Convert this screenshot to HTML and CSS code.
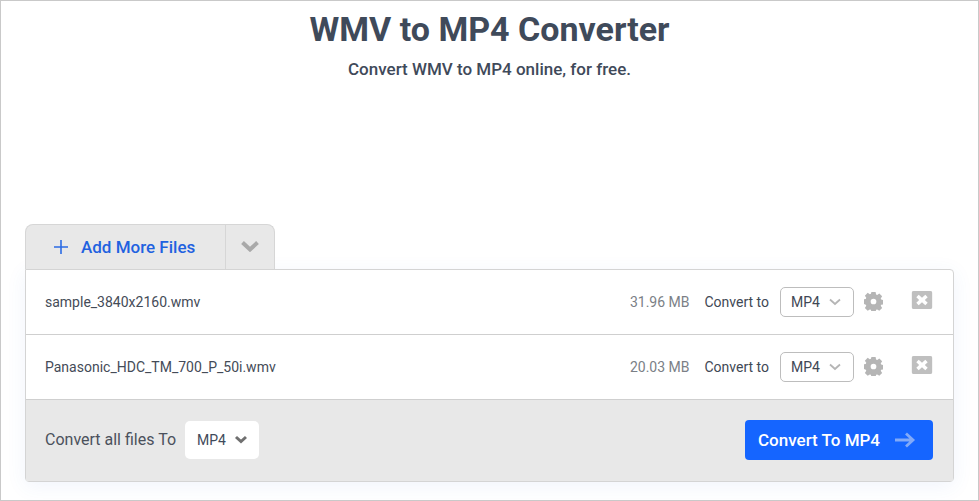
FILE: index.html
```html
<!DOCTYPE html>
<html lang="en">
<head>
    <meta charset="UTF-8">
    <meta name="viewport" content="width=device-width, initial-scale=1.0">
    <title>WMV to MP4 Converter</title>
    <link rel="stylesheet" href="styles.css">
</head>
<body>
    <div class="frame">
        <h1>WMV to MP4 Converter</h1>
        <p class="subtitle">Convert WMV to MP4 online, for free.</p>

        <div class="uploader">
            <!-- Add files tab -->
            <div class="tabs">
                <div class="tab-add">
                    <svg class="icon-plus" width="16" height="16" viewBox="0 0 16 16"><path d="M8 1v14M1 8h14"/></svg>
                    <span>Add More Files</span>
                </div>
                <div class="tab-more">
                    <svg class="icon-chevron-bold" width="20" height="12" viewBox="0 0 20 12"><path d="M2.500 2.500 10 9.500l7.500-7"/></svg>
                </div>
            </div>

            <div class="card">
                <div class="file-row">
                    <span class="file-name">sample_3840x2160.wmv</span>
                    <span class="file-size">31.96 MB</span>
                    <span class="convert-label">Convert to</span>
                    <div class="select">
                        <span>MP4</span>
                        <svg class="icon-chevron" width="14" height="8" viewBox="0 0 14 8"><path d="M2 1.500 7 6l5-4.500"/></svg>
                    </div>
                    <svg class="icon-gear" width="19" height="19" viewBox="0 0 20 20"><use href="#gear"/></svg>
                    <svg class="icon-close" width="22" height="18" viewBox="0 0 22 19"><use href="#close"/></svg>
                </div>
                <div class="file-row">
                    <span class="file-name">Panasonic_HDC_TM_700_P_50i.wmv</span>
                    <span class="file-size">20.03 MB</span>
                    <span class="convert-label">Convert to</span>
                    <div class="select">
                        <span>MP4</span>
                        <svg class="icon-chevron" width="14" height="8" viewBox="0 0 14 8"><path d="M2 1.500 7 6l5-4.500"/></svg>
                    </div>
                    <svg class="icon-gear" width="19" height="19" viewBox="0 0 20 20"><use href="#gear"/></svg>
                    <svg class="icon-close" width="22" height="18" viewBox="0 0 22 19"><use href="#close"/></svg>
                </div>

                <div class="card-footer">
                    <span class="all-label">Convert all files To</span>
                    <div class="select-all">
                        <span>MP4</span>
                        <svg class="icon-chevron-dark" width="14" height="9" viewBox="0 0 14 9"><path d="M2 2l5 4.500L12 2"/></svg>
                    </div>
                    <button class="convert-btn">
                        <span>Convert To MP4</span>
                        <svg class="icon-arrow" width="22" height="16" viewBox="0 0 22 16"><path d="M1 8h18M12 1.500 19 8l-7 6.500"/></svg>
                    </button>
                </div>
            </div>
        </div>
    </div>

    <!-- Shared icons -->
    <svg class="icon-defs" width="0" height="0">
        <symbol id="gear" viewBox="0 0 20 20">
            <path fill-rule="evenodd" d="M7.800 0h4.400l.5 2.600 1.200.5 2.200-1.500 3 3-1.500 2.200.5 1.200 2.600.5v4.400l-2.600.5-.5 1.200 1.500 2.200-3 3-2.200-1.500-1.200.5-.5 2.600H7.800l-.5-2.600-1.200-.5-2.200 1.500-3-3 1.500-2.200-.5-1.200L-.700 12.200V7.800l2.600-.5.5-1.200L.9 3.900l3-3 2.200 1.500 1.200-.5zM10 7a3 3 0 1 0 0 6 3 3 0 0 0 0-6z"/>
        </symbol>
        <symbol id="close" viewBox="0 0 22 19">
            <path fill-rule="evenodd" d="M2 0h18a2 2 0 0 1 2 2v15a2 2 0 0 1-2 2H2a2 2 0 0 1-2-2V2a2 2 0 0 1 2-2zm5.500 4L5 6.500 8 9.500l-3 3L7.500 15l3.500-3 3.500 3 2.500-2.500-3-3 3-3L14.500 4 11 7z"/>
        </symbol>
    </svg>
</body>
</html>
```

FILE: styles.css
```css
* {
    box-sizing: border-box;
}

body {
    margin: 0;
    font-family: Roboto, "Liberation Sans", sans-serif;
    color: #3f4a5a;
    background-color: #fff;
}

.frame {
    height: 501px;
    border: 1px solid #c9c9c9;
    padding: 9px 24px 0;
    overflow: hidden;
}

h1 {
    margin: 0;
    font-size: 34px;
    line-height: 38px;
    font-weight: 700;
    text-align: center;
}

.subtitle {
    margin: 10px 0 0;
    font-size: 17px;
    line-height: 22px;
    font-weight: 500;
    text-align: center;
}

.uploader {
    margin-top: 144px;
}

/* Add files tab */
.tabs {
    position: relative;
    z-index: 1;
    display: flex;
    width: 250px;
    height: 45px;
    background-color: #e8e8e8;
    border: 1px solid #d6d6d6;
    border-bottom: none;
    border-radius: 8px 8px 0 0;
}

.tab-add {
    width: 199px;
    display: flex;
    align-items: center;
    gap: 12px;
    padding-left: 27px;
    font-size: 17px;
    font-weight: 500;
    color: #1f62e0;
}

.tab-more {
    flex: 1;
    display: flex;
    align-items: center;
    justify-content: center;
    padding-bottom: 3px;
    border-left: 1px solid #d6d6d6;
}

.icon-plus {
    fill: none;
    stroke: #2b6be4;
    stroke-width: 1.600;
}

.icon-chevron-bold {
    fill: none;
    stroke: #a9a9a9;
    stroke-width: 4;
}

/* File list */
.card {
    width: 929px;
    background-color: #fff;
    border: 1px solid #d4d4d4;
    border-radius: 0 4px 4px 4px;
    box-shadow: 0 4px 20px rgba(70, 110, 220, 0.08);
}

.file-row {
    display: flex;
    align-items: center;
    height: 65px;
    padding: 0 20px 0 19px;
    border-bottom: 1px solid #cfcfcf;
    font-size: 14px;
}

.file-name {
    flex: 1;
    color: #444b57;
}

.file-size {
    color: #7b7f86;
}

.convert-label {
    margin-left: 15px;
    color: #3f4855;
}

.select {
    display: flex;
    align-items: center;
    justify-content: space-between;
    width: 74px;
    height: 30px;
    margin-left: 11px;
    padding: 0 11px 0 10px;
    border: 1px solid #bdbdbd;
    border-radius: 5px;
    color: #3f4855;
}

.icon-chevron {
    fill: none;
    stroke: #b5b5b5;
    stroke-width: 1.800;
}

.icon-gear {
    margin-left: 10px;
    margin-bottom: 2px;
    fill: #b5b5b5;
    overflow: visible;
}

.icon-close {
    margin-left: 28px;
    margin-bottom: 4px;
    fill: #bfbfbf;
}

.icon-defs {
    position: absolute;
}

/* Bottom bar */
.card-footer {
    display: flex;
    align-items: center;
    height: 81px;
    padding: 0 20px 2px 19px;
    background-color: #e8e8e8;
}

.all-label {
    font-size: 16px;
    color: #4b515c;
}

.select-all {
    display: flex;
    align-items: center;
    justify-content: space-between;
    width: 74px;
    height: 38px;
    margin-left: 9px;
    padding: 0 11px 0 12px;
    background-color: #fff;
    border-radius: 5px;
    font-size: 14px;
}

.icon-chevron-dark {
    fill: none;
    stroke: #707070;
    stroke-width: 3;
}

.convert-btn {
    display: flex;
    align-items: center;
    justify-content: space-between;
    width: 188px;
    height: 40px;
    margin-left: auto;
    padding: 0 17px 0 13px;
    background-color: #1565ff;
    border: none;
    border-radius: 4px;
    color: #fff;
    font-family: inherit;
    font-size: 17px;
    font-weight: 500;
}

.icon-arrow {
    fill: none;
    stroke: #82aaf8;
    stroke-width: 2.800;
}
```
